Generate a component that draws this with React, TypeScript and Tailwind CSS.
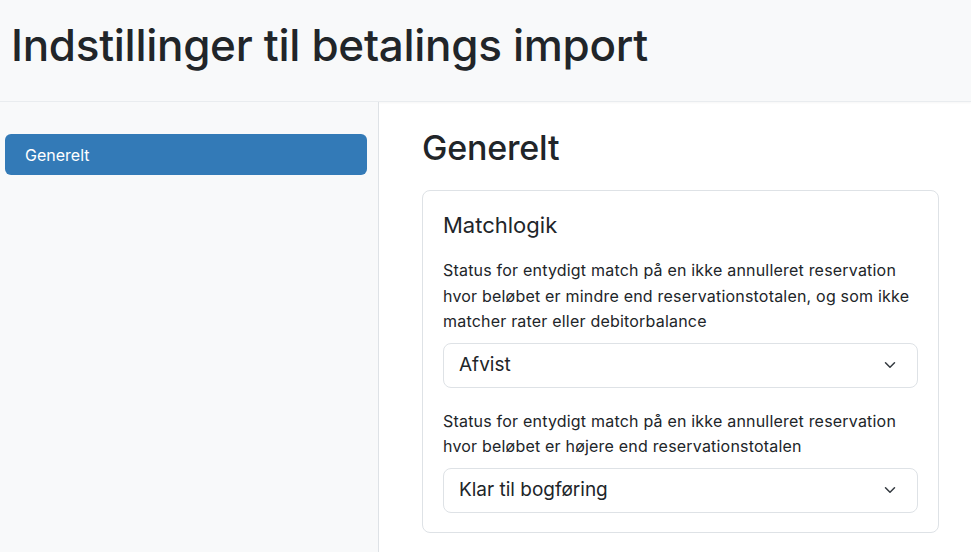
import { ChevronDown } from "lucide-react";

const font = { fontFamily: 'Inter, "Liberation Sans", Arial, sans-serif' };

function Select({ value }: { value: string }) {
  return (
    <div className="flex h-[45px] items-center justify-between rounded-lg border border-[#dee2e6] bg-white pl-[15px] pr-[18px] text-[19px] text-[#212529]">
      <span>{value}</span>
      <ChevronDown className="h-[18px] w-[18px] text-[#343a40]" strokeWidth={2} />
    </div>
  );
}

export default function App() {
  return (
    <div className="min-h-[552px] bg-white text-[#212529]" style={font}>
      {/* Header */}
      <header className="flex h-[102px] items-center border-b border-[#e9ecef] bg-[#f8f9fa] pl-[11px] shadow-[0_1px_2px_rgba(0,0,0,0.04)]">
        <h1 className="pb-[12px] text-[44px] font-medium leading-none tracking-[-0.3px]">
          Indstillinger til betalings import
        </h1>
      </header>

      <div className="flex min-h-[450px]">
        {/* Sidebar */}
        <aside className="w-[379px] shrink-0 border-r border-[#dee2e6] bg-[#f8f9fa] pl-[5px] pr-[11px] pt-[32px]">
          <div className="flex h-[41px] items-center rounded-md bg-[#337ab7] pl-[20px] text-[16px] text-white">
            Generelt
          </div>
        </aside>

        {/* Main */}
        <main className="flex-1 pl-[43px] pr-[32px] pt-[26px]">
          <h2 className="mb-[22px] text-[34px] font-medium leading-[40px] tracking-[-0.2px]">Generelt</h2>
          <section className="rounded-lg border border-[#dee2e6] px-[20px] pb-[19px] pt-[18px]">
            <h3 className="mb-[17px] text-[22px] leading-[32px]">Matchlogik</h3>
            <p className="mb-[8px] text-[16px] leading-[25.5px] tracking-[0.2px]">
              Status for entydigt match på en ikke annulleret reservation hvor beløbet er mindre end
              reservationstotalen, og som ikke matcher rater eller debitorbalance
            </p>
            <Select value="Afvist" />
            <p className="mb-[8px] mt-[21px] text-[16px] leading-[25.5px] tracking-[0.2px]">
              Status for entydigt match på en ikke annulleret reservation hvor beløbet er højere end
              reservationstotalen
            </p>
            <Select value="Klar til bogføring" />
          </section>
        </main>
      </div>
    </div>
  );
}
